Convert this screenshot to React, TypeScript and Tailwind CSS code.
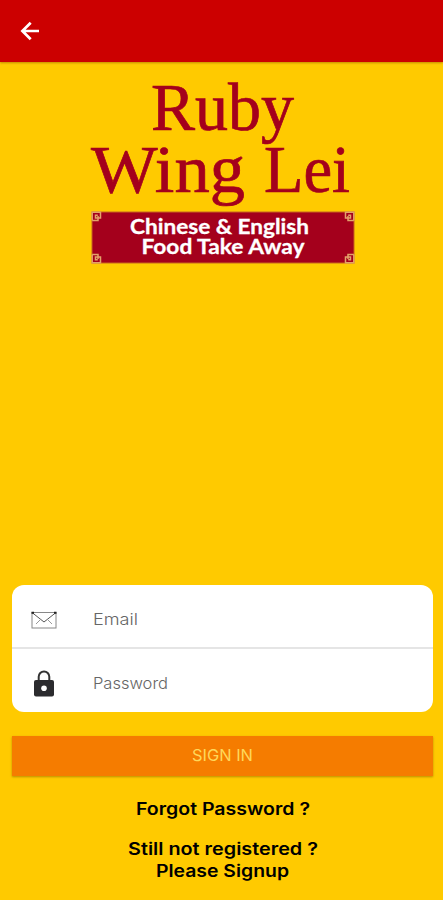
import React from 'react';

const INK = '#a4001c';

function Corner({ transform }: { transform: string }) {
  return (
    <g transform={transform} fill="none" stroke="#e3a36a" strokeWidth="1.5">
      <path d="M0.7 9V0.7H9V6.5H4V3.7H6.3" />
      <path d="M0.7 9H6.5V4.5" />
    </g>
  );
}

function Logo() {
  return (
    <svg className="block" width="443" height="210" viewBox="0 62 443 210" role="img" aria-label="Ruby Wing Lei">
      <g fill={INK} stroke={INK} strokeWidth="0.7" className="font-['Liberation_Serif',serif]" fontSize="68">
        <text x="151" y="130" textLength="143" lengthAdjust="spacingAndGlyphs">Ruby</text>
        <text x="91" y="192" textLength="154" lengthAdjust="spacingAndGlyphs">Wing</text>
        <text x="264" y="192" textLength="86" lengthAdjust="spacingAndGlyphs">Lei</text>
      </g>
      <rect x="92" y="212" width="262" height="51" fill={INK} stroke="#c8641e" strokeWidth="1" />
      <Corner transform="translate(91.5 211.5)" />
      <Corner transform="translate(354.5 211.5) scale(-1 1)" />
      <Corner transform="translate(91.5 263.5) scale(1 -1)" />
      <Corner transform="translate(354.5 263.5) scale(-1 -1)" />
      <g fill="#fff" className="font-['Lato',sans-serif] font-bold" stroke="#fff" strokeWidth="0.3" fontSize="20">
        <text x="130" y="234" textLength="179" lengthAdjust="spacingAndGlyphs">Chinese &amp; English</text>
        <text x="141.5" y="254" textLength="163" lengthAdjust="spacingAndGlyphs">Food Take Away</text>
      </g>
    </svg>
  );
}

function BackArrow() {
  return (
    <svg width="20" height="20" viewBox="0 0 20 20" fill="none" stroke="#fff" strokeWidth="2.7">
      <path d="M19 10H2.5M10.7 1.7L2.4 10l8.3 8.3" />
    </svg>
  );
}

function Envelope() {
  return (
    <svg width="26" height="18" viewBox="0 0 26 18" fill="none" stroke="#888" strokeWidth="1">
      <rect x="1" y="1.5" width="24" height="15.5" />
      <path d="M1 1.5L13 11L25 1.5" stroke="#555" />
      <path d="M5 13L9.5 8.5M21 13L16.5 8.5" stroke="#999" />
      <path d="M0.5 1.7H3M23 1.7H25.5" stroke="#222" strokeWidth="2" />
    </svg>
  );
}

function Lock() {
  return (
    <svg width="20" height="27" viewBox="0 0 20 27">
      <path d="M4.7 11V6.8a5.3 5.3 0 0 1 10.6 0V11" fill="none" stroke="#333" strokeWidth="2" />
      <rect x="0" y="10" width="20" height="16.5" rx="2" fill="#2b2b2e" />
      <circle cx="10" cy="18.2" r="2.8" fill="#fff" />
    </svg>
  );
}

function Line({ text, width, size, className }: { text: string; width: number; size: number; className: string }) {
  return (
    <svg width={width} height="22" className={`block overflow-visible ${className}`}>
      <text x="0" y="17" fontSize={size} textLength={width} lengthAdjust="spacingAndGlyphs">{text}</text>
    </svg>
  );
}

function Field({ icon, label, width }: { icon: React.ReactNode; label: string; width: number }) {
  return (
    <div className="flex flex-1 items-center">
      <div className="flex w-[64px] justify-center">{icon}</div>
      <Line text={label} width={width} size={16} className="mb-0.5 ml-[17px] fill-[#666] font-light" />
    </div>
  );
}

export default function App() {
  return (
    <div className="flex h-[900px] w-[443px] flex-col overflow-hidden bg-[#ffca00] font-['Inter',sans-serif]">
      <header className="flex h-[62px] shrink-0 items-center bg-[#cc0000] pl-5 shadow-[0_1px_2px_rgba(120,60,0,0.45)]">
        <BackArrow />
      </header>
      <Logo />
      <main className="mt-[313px] flex flex-col items-center pl-0.5">
        <section className="flex h-[127px] w-[421px] flex-col rounded-[12px] bg-white">
          <div className="flex h-[64px] items-center border-b-2 border-[#e5e5e5] pt-2">
            <Field icon={<Envelope />} label="Email" width={45} />
          </div>
          <div className="flex h-[63px] items-center pt-1.5">
            <Field icon={<Lock />} label="Password" width={75} />
          </div>
        </section>
        <button className="mt-[24px] flex h-10 w-[421px] items-center justify-center bg-[#f57c00] pb-0.5 shadow-[0_1px_2px_rgba(120,80,0,0.5)]">
          <Line text="SIGN IN" width={61} size={16} className="fill-[#ffd75a]" />
        </button>
        <a className="mt-[22px]"><Line text="Forgot Password ?" width={174} size={17} className="fill-black font-semibold" /></a>
        <a className="mt-[18px] flex flex-col items-center">
          <Line text="Still not registered ?" width={190} size={17} className="fill-black font-semibold" />
          <Line text="Please Signup" width={133} size={17} className="fill-black font-semibold" />
        </a>
      </main>
    </div>
  );
}
